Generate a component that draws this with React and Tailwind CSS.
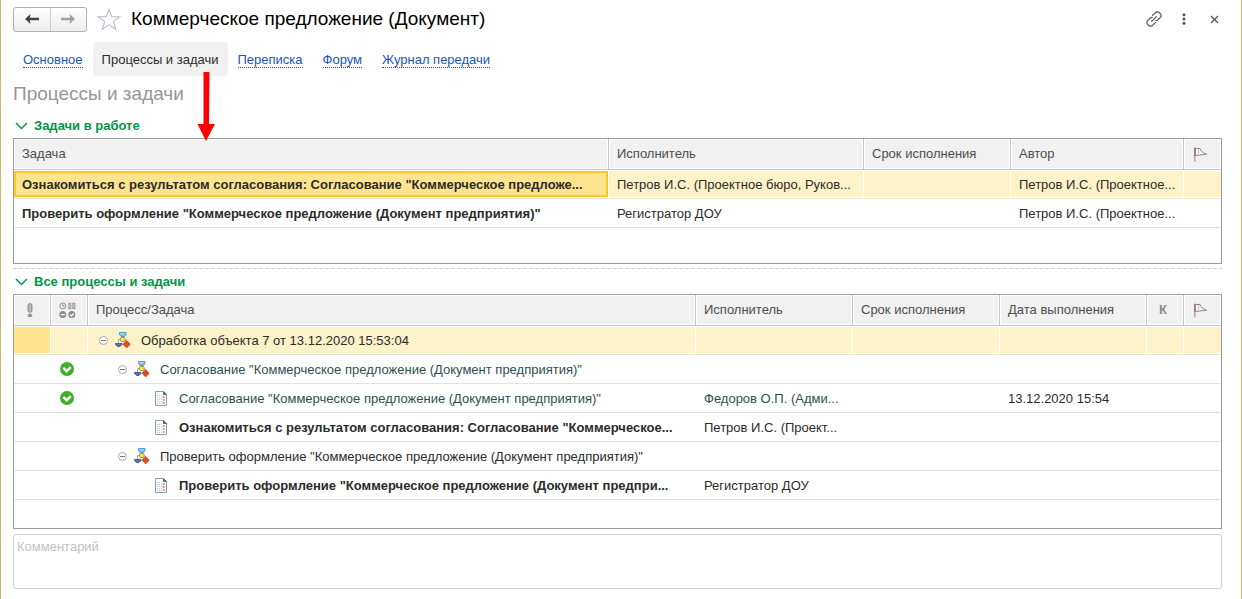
import React from 'react';

const tabs = ['Основное', 'Процессы и задачи', 'Переписка', 'Форум', 'Журнал передачи'];

const activeTasks = [
  {
    task: 'Ознакомиться с результатом согласования: Согласование "Коммерческое предложе...',
    performer: 'Петров И.С. (Проектное бюро, Руков...',
    author: 'Петров И.С. (Проектное...',
    selected: true,
  },
  {
    task: 'Проверить оформление "Коммерческое предложение (Документ предприятия)"',
    performer: 'Регистратор ДОУ',
    author: 'Петров И.С. (Проектное...',
  },
];

const processes = [
  { level: 0, type: 'process', name: 'Обработка объекта 7 от 13.12.2020 15:53:04', selected: true },
  { level: 1, type: 'process', name: 'Согласование "Коммерческое предложение (Документ предприятия)"', done: true },
  {
    level: 2,
    type: 'task',
    name: 'Согласование "Коммерческое предложение (Документ предприятия)"',
    performer: 'Федоров О.П. (Адми...',
    date: '13.12.2020 15:54',
    done: true,
  },
  {
    level: 2,
    type: 'task',
    name: 'Ознакомиться с результатом согласования: Согласование "Коммерческое...',
    performer: 'Петров И.С. (Проект...',
    bold: true,
  },
  { level: 1, type: 'process', name: 'Проверить оформление "Коммерческое предложение (Документ предприятия)"' },
  {
    level: 2,
    type: 'task',
    name: 'Проверить оформление "Коммерческое предложение (Документ предпри...',
    performer: 'Регистратор ДОУ',
    bold: true,
  },
];

const indents = ['pl-[10px]', 'pl-[29px]', 'pl-[67px]'];

const ArrowIcon = ({ flip }) => (
  <svg width="14" height="10" viewBox="0 0 14 10" aria-hidden="true">
    <path
      d="M0 5 L5.5 0 L4.8 3.8 H14 V6.2 H4.8 L5.5 10 Z"
      fill="currentColor"
      transform={flip ? 'translate(14 0) scale(-1 1)' : undefined}
    />
  </svg>
);

const StarIcon = () => (
  <svg width="24" height="23" viewBox="0 0 24 23" fill="none" stroke="#b3bcc5" strokeWidth="1.1" aria-hidden="true">
    <path d="M12 1.2 L14.7 8.6 L22.8 8.8 L16.4 13.6 L18.7 21.4 L12 16.8 L5.3 21.4 L7.6 13.6 L1.2 8.8 L9.3 8.6 Z" />
  </svg>
);

const LinkIcon = () => (
  <svg width="16" height="16" viewBox="0 0 16 16" fill="none" stroke="#555" strokeWidth="1.2" strokeLinecap="round" aria-hidden="true">
    <path d="M6.6 4.4 L9.2 1.8 A2.9 2.9 0 0 1 13.6 1.8 L14.2 2.4 A2.9 2.9 0 0 1 14.2 6.6 L11.8 9 Q10.8 9.8 9.8 9.6" />
    <path d="M9.4 11.6 L6.8 14.2 A2.9 2.9 0 0 1 2.4 14.2 L1.8 13.6 A2.9 2.9 0 0 1 1.8 9.4 L4.2 7 Q5.2 6.2 6.2 6.4" />
    <path d="M5.6 10.4 L10.4 5.6" />
  </svg>
);

const FlagIcon = () => (
  <svg width="14" height="15" viewBox="0 0 14 15" fill="none" aria-hidden="true">
    <path d="M1.5 1.5 H6 Q7 5.5 12.8 7.2 L1.5 8.5 Z" fill="#f6f6f6" stroke="#8c8c8c" />
    <path d="M4.5 2 V7.5" stroke="#c0c0c0" />
    <path d="M0.8 0.5 V14.5" stroke="#9a9a9a" strokeWidth="1.2" />
    <path d="M0.8 1 V9" stroke="#a66a60" strokeWidth="1.2" />
  </svg>
);

const ImportanceIcon = () => (
  <svg width="6" height="15" viewBox="0 0 6 15" aria-hidden="true">
    <rect x="1.1" y="0.7" width="3.8" height="8.6" rx="1.6" fill="#b9b9b9" stroke="#888" />
    <ellipse cx="3" cy="12.4" rx="2.3" ry="1.9" fill="#999" />
  </svg>
);

const StatusIcon = () => (
  <svg width="17" height="17" viewBox="0 0 17 17" fill="none" aria-hidden="true">
    <circle cx="3.8" cy="4" r="3" stroke="#8c8c8c" />
    <path d="M3.8 2 V4.2 H5.6" stroke="#8c8c8c" strokeWidth="0.9" />
    <rect x="9.8" y="1.3" width="2" height="5.4" fill="#d5d5d5" stroke="#999" />
    <rect x="13.8" y="1.3" width="2" height="5.4" fill="#d5d5d5" stroke="#999" />
    <circle cx="3.8" cy="12.6" r="3.5" fill="#8c8c8c" />
    <path d="M1.8 12.6 H5.8" stroke="#fff" strokeWidth="1.4" />
    <circle cx="12.8" cy="12.6" r="3.5" fill="#8c8c8c" />
    <path d="M11 12.4 L12.5 13.9 L14.8 11.3" stroke="#fff" strokeWidth="1.2" />
  </svg>
);

const DoneIcon = () => (
  <svg width="14" height="14" viewBox="0 0 14 14" aria-label="Выполнено" role="img">
    <circle cx="7" cy="7" r="7" fill="#3fae2a" />
    <path d="M3.3 5.8 L6.7 9.2 L10.8 5.2" fill="none" stroke="#fff" strokeWidth="2.4" />
  </svg>
);

const CollapseIcon = () => (
  <svg width="9" height="9" viewBox="0 0 9 9" fill="none" aria-hidden="true">
    <circle cx="4.5" cy="4.5" r="4" fill="#fff" stroke="#a8a8a8" />
    <path d="M2 4.5 H7" stroke="#777" />
  </svg>
);

const ProcessIcon = () => (
  <svg width="16" height="16" viewBox="0 0 16 16" fill="none" aria-hidden="true">
    <path d="M5.5 7.5 H3.5 V11 M10 8 H11.5 V10" stroke="#9aa3a8" />
    <path d="M4.5 0.5 H11 V2.5 L9.5 4.5 H6 L4.5 2.5 Z" fill="#7cc4ea" stroke="#4a9ccb" />
    <path d="M5.5 1.5 H10" stroke="#a9dbf5" />
    <rect x="5.5" y="5.5" width="4.5" height="4" rx="1" fill="#fbe35c" stroke="#a8963c" />
    <path d="M0.5 11.5 H7 V12.5 L5 14.5 H2.5 L0.5 12.5 Z" fill="#52789c" stroke="#45688a" />
    <path d="M11.6 8.8 L15.2 12.3 L11.6 15.8 L8 12.3 Z" fill="#e34b26" stroke="#c2492e" strokeLinejoin="round" />
  </svg>
);

const TaskIcon = () => (
  <svg width="12" height="15" viewBox="0 0 12 15" fill="none" aria-hidden="true">
    <path d="M0.5 0.5 H8.5 L11.5 3.5 V14.5 H0.5 Z" fill="#fbfdff" stroke="#8a9cb0" />
    <path d="M8.5 0.5 V3.5 H11.5 Z" fill="#4f6a85" stroke="#4f6a85" />
    <path d="M2.5 4 V13 M4.5 4 V13" stroke="#b9cbd9" strokeDasharray="1 1" />
    <path d="M6.5 4 V13" stroke="#c9d2dc" strokeDasharray="1 1" />
    <path d="M8.8 5 V13" stroke="#f09a86" strokeWidth="2" strokeDasharray="2 1" />
  </svg>
);

const SectionTitle = ({ children }) => (
  <h3 className="text-[13px] leading-4 font-bold text-[#009646]">
    <button type="button" className="flex items-center gap-[6px] pl-[2px] text-left">
      <svg width="13" height="8" viewBox="0 0 13 8" fill="none" stroke="currentColor" strokeWidth="1.4" aria-hidden="true">
        <path d="M1 1 L6.5 6.5 L12 1" />
      </svg>
      {children}
    </button>
  </h3>
);

const Th = ({ children, center, label }) => (
  <th
    scope="col"
    aria-label={label}
    className={`h-[31px] overflow-hidden border-r border-b border-[#c6c6c6] bg-[#f1f1f1] font-normal whitespace-nowrap text-[#4d4d4d] shadow-[inset_0_0_0_1px_#fff] last:border-r-0 ${
      center ? 'pr-1 pl-0' : 'px-2 text-left'
    }`}
  >
    {center ? <div className="flex justify-center">{children}</div> : children}
  </th>
);

const Td = ({ children, selected, current, className = 'px-2 pt-0.5' }) => {
  let fill = 'border-[#e2e2e2]';
  if (selected) {
    fill = 'border-[#e6e3da] border-r border-r-white bg-[#fef2c8] shadow-[inset_0_1px_0_#fff,inset_0_-1px_0_#fff] last:border-r-0';
  }
  if (current) {
    fill = 'border-[#e6e3da] border-r border-r-white bg-[#ffe48f] shadow-[inset_0_1px_0_#fff,inset_0_-1px_0_#fff]';
  }
  return (
    <td className={`h-[29px] overflow-hidden border-b whitespace-nowrap ${fill} ${className}`}>{children}</td>
  );
};

const App = () => {
  return (
    <div className="relative min-h-screen border-x border-[#c9b96a] bg-white pr-[19px] pl-3 font-['Liberation_Sans',Arial,sans-serif] text-[13px] leading-4 text-[#2b2b2b]">
      <header className="flex h-[38px] items-center">
        <div className="flex h-[25px] w-[74px] overflow-hidden rounded-[3px] border border-[#b0b0b0] bg-linear-to-b from-white to-[#ececec]">
          <button type="button" aria-label="Назад" className="flex flex-1 items-center justify-center border-r border-[#cfcfcf] text-[#444]">
            <ArrowIcon />
          </button>
          <button type="button" aria-label="Вперед" className="flex flex-1 items-center justify-center text-[#a0a0a0]">
            <ArrowIcon flip />
          </button>
        </div>
        <button type="button" aria-label="В избранное" className="ml-[10px]">
          <StarIcon />
        </button>
        <h1 className="ml-[10px] flex-1 text-[19px] leading-6 text-black">Коммерческое предложение (Документ)</h1>
        <div className="flex items-center text-[#555]">
          <button type="button" aria-label="Получить ссылку">
            <LinkIcon />
          </button>
          <button type="button" aria-label="Ещё" className="ml-5">
            <svg width="4" height="12" viewBox="0 0 4 12" fill="currentColor" aria-hidden="true">
              <circle cx="2" cy="1.7" r="1.5" />
              <circle cx="2" cy="6" r="1.5" />
              <circle cx="2" cy="10.3" r="1.5" />
            </svg>
          </button>
          <button type="button" aria-label="Закрыть" className="mr-[3px] ml-6">
            <svg width="9" height="9" viewBox="0 0 9 9" fill="none" stroke="currentColor" strokeWidth="1.3" aria-hidden="true">
              <path d="M1 1 L8 8 M8 1 L1 8" />
            </svg>
          </button>
        </div>
      </header>

      <nav className="mt-1 flex h-[34px] items-center">
        {tabs.map((tab) =>
          tab === 'Процессы и задачи' ? (
            <a key={tab} href="#tasks" aria-current="page" className="flex h-[34px] items-center rounded-sm bg-[#f1f1f1] px-[9px] pt-0.5">
              {tab}
            </a>
          ) : (
            <a key={tab} href="#tab" className="px-[10px] pt-0.5 text-[#1a56b8]">
              <span className="border-b border-dotted border-[#1a56b8]">{tab}</span>
            </a>
          )
        )}
      </nav>

      <h2 className="mt-[6px] text-[19px] leading-6 text-[#969696]">Процессы и задачи</h2>

      <section className="mt-3">
        <SectionTitle>Задачи в работе</SectionTitle>
        <div className="mt-1 border border-[#9c9c9c] pb-[35px]">
          <table className="w-full table-fixed border-separate border-spacing-0">
            <colgroup>
              <col />
              <col className="w-[255px]" />
              <col className="w-[147px]" />
              <col className="w-[173px]" />
              <col className="w-[37px]" />
            </colgroup>
            <thead>
              <tr>
                <Th>Задача</Th>
                <Th>Исполнитель</Th>
                <Th>Срок исполнения</Th>
                <Th>Автор</Th>
                <Th center label="Флаг">
                  <FlagIcon />
                </Th>
              </tr>
            </thead>
            <tbody>
              {activeTasks.map((row) => (
                <tr key={row.task}>
                  <Td selected={row.selected} className={row.selected ? 'p-0 font-bold' : 'px-2 pt-0.5 font-bold'}>
                    {row.selected ? (
                      <div className="flex h-[26px] items-center overflow-hidden border-2 border-[#fcc822] bg-[#ffe48f] px-[6px] pt-0.5">
                        {row.task}
                      </div>
                    ) : (
                      row.task
                    )}
                  </Td>
                  <Td selected={row.selected}>{row.performer}</Td>
                  <Td selected={row.selected} />
                  <Td selected={row.selected}>{row.author}</Td>
                  <Td selected={row.selected} />
                </tr>
              ))}
            </tbody>
          </table>
        </div>
      </section>

      <svg width="100%" height="1" className="mt-1 block" aria-hidden="true">
        <path d="M0 0.5 H4000" stroke="#d2d2d2" strokeDasharray="4 2" />
      </svg>

      <section className="mt-[5px]">
        <SectionTitle>Все процессы и задачи</SectionTitle>
        <div className="mt-1 border border-[#9c9c9c] pb-7">
          <table className="w-full table-fixed border-separate border-spacing-0">
            <colgroup>
              <col className="w-[37px]" />
              <col className="w-[37px]" />
              <col />
              <col className="w-[157px]" />
              <col className="w-[147px]" />
              <col className="w-[147px]" />
              <col className="w-[37px]" />
              <col className="w-[37px]" />
            </colgroup>
            <thead>
              <tr>
                <Th center label="Важность">
                  <ImportanceIcon />
                </Th>
                <Th center label="Состояние">
                  <StatusIcon />
                </Th>
                <Th>Процесс/Задача</Th>
                <Th>Исполнитель</Th>
                <Th>Срок исполнения</Th>
                <Th>Дата выполнения</Th>
                <Th center>
                  <span className="font-bold text-[#8a8a8a]">К</span>
                </Th>
                <Th center label="Флаг">
                  <FlagIcon />
                </Th>
              </tr>
            </thead>
            <tbody>
              {processes.map((row, index) => (
                <tr key={index}>
                  <Td selected={row.selected} current={row.selected} />
                  <Td selected={row.selected} className="pr-0 pl-[9px]">
                    {row.done && <DoneIcon />}
                  </Td>
                  <Td selected={row.selected} className="px-0">
                    <div className={`flex items-center ${indents[row.level]} ${row.bold ? 'font-bold' : ''}`}>
                      {row.type === 'process' ? (
                        <>
                          <button type="button" aria-label="Свернуть" className="mr-[7px] ml-[1px]">
                            <CollapseIcon />
                          </button>
                          <ProcessIcon />
                        </>
                      ) : (
                        <TaskIcon />
                      )}
                      <span className={`pt-0.5 ${row.type === 'process' ? 'ml-[10px]' : 'ml-3'} ${row.done ? 'text-[#2f4f4f]' : ''}`}>
                        {row.name}
                      </span>
                    </div>
                  </Td>
                  <Td selected={row.selected}>
                    <span className={row.done ? 'text-[#2f4f4f]' : ''}>{row.performer}</span>
                  </Td>
                  <Td selected={row.selected} />
                  <Td selected={row.selected}>{row.date}</Td>
                  <Td selected={row.selected} />
                  <Td selected={row.selected} />
                </tr>
              ))}
            </tbody>
          </table>
        </div>
      </section>

      <textarea
        aria-label="Комментарий"
        placeholder="Комментарий"
        className="mt-[5px] block h-[55px] w-full resize-none rounded-[3px] border border-[#d0d0d0] px-[3px] py-1 placeholder:text-[#c2c2c2]"
      />

      {/* pointer from the active tab down to the task list */}
      <svg width="18" height="69" viewBox="0 0 18 69" className="absolute top-[72px] left-[196px]" aria-hidden="true">
        <path d="M6.5 0 H12.5 L12 52 H18 L9 69 L0.5 52 H6.5 Z" fill="#fe0000" />
      </svg>
    </div>
  );
};

export default App;
